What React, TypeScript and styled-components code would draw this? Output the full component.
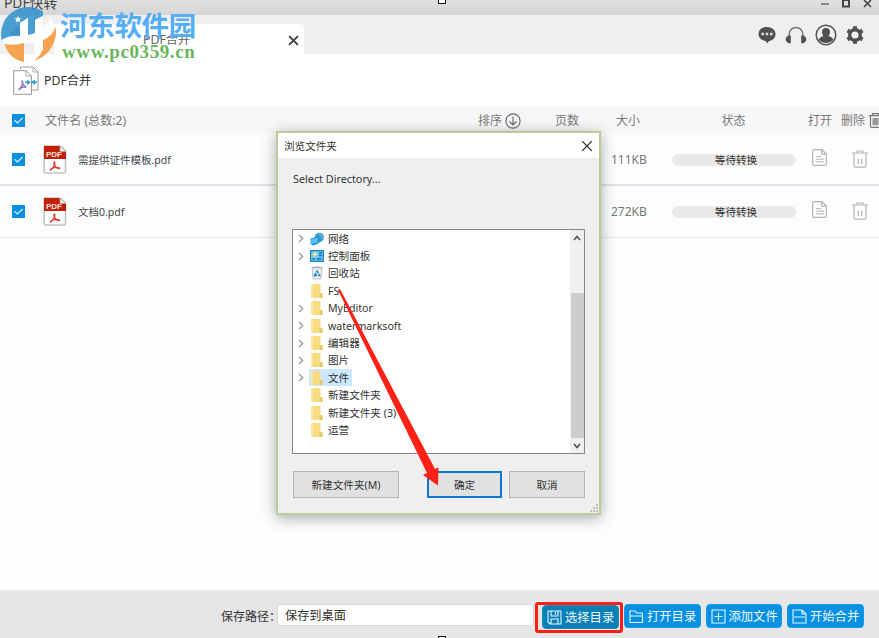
import React from 'react';
import styled, { createGlobalStyle } from 'styled-components';

const Global = createGlobalStyle`
  * { box-sizing: border-box; }
  body { margin: 0; overflow: hidden; font-family: "Noto Sans", "Noto Sans CJK SC", sans-serif; }
  svg { display: block; flex: none; }
`;

const Window = styled.div`
  position: relative;
  display: flex;
  flex-direction: column;
  width: 879px;
  height: 638px;
  overflow: hidden;
  background: #fcfdff;
  color: #333;
`;
const Text = styled.span<{ $size?: number; $color?: string; $track?: number; $weight?: number }>`
  font-size: ${p => p.$size ?? 12}px;
  line-height: 16px;
  color: ${p => p.$color ?? '#333'};
  letter-spacing: ${p => p.$track ?? 0}px;
  font-weight: ${p => p.$weight ?? 400};
  white-space: nowrap;
`;
const TitleBar = styled.header`
  display: flex;
  justify-content: space-between;
  align-items: flex-start;
  height: 15px;
  flex: none;
  padding: 0 6px 0 4px;
  background: linear-gradient(#e0e0e0, #d6d6d6);
`;
const AppName = styled.div`
  margin-top: -5px;
  display: flex;
`;
const TabStrip = styled.nav`
  display: flex;
  align-items: flex-end;
  height: 39px;
  flex: none;
  background: #efefef;
`;
const HomeTab = styled.div`
  width: 54px;
  padding: 0 0 11px 8px;
`;
const Tab = styled.div`
  display: flex;
  align-items: center;
  justify-content: space-between;
  width: 250px;
  height: 30px;
  padding: 2px 5px 0 89px;
  border-radius: 0 4px 0 0;
  background: #fff;
`;
const Tools = styled.div`
  display: flex;
  align-items: center;
  gap: 8px;
  height: 39px;
  margin-left: auto;
  padding-right: 14px;
`;
const PageHead = styled.div`
  display: flex;
  align-items: center;
  gap: 5px;
  height: 53px;
  flex: none;
  padding-left: 13px;
  background: #fff;
`;
const Grid = styled.div`
  display: grid;
  grid-template-columns: 43px 435px 77px 56px 60px 137px 33px 38px;
  align-items: center;
`;
const HeadRow = styled(Grid)`
  height: 26px;
  padding-top: 1px;
  background: #f7f7f7;
`;
const FileRow = styled(Grid)<{ $line: number }>`
  height: ${p => 51 + p.$line}px;
  padding-top: ${p => (p.$line > 1 ? 2 : 0)}px;
  border-bottom: ${p => p.$line}px solid ${p => (p.$line > 1 ? '#e0e1e4' : '#e8e9eb')};
`;
const Cell = styled.div<{ $pad?: number; $gap?: number; $lift?: number }>`
  display: flex;
  align-items: center;
  gap: ${p => p.$gap ?? 0}px;
  padding-left: ${p => p.$pad ?? 0}px;
  padding-bottom: ${p => p.$lift ?? 0}px;
`;
const StatusCell = styled.div`
  width: 125px;
  display: flex;
  justify-content: center;
`;
const StatusPill = styled.div`
  display: flex;
  align-items: center;
  justify-content: center;
  width: 124px;
  height: 12px;
  padding-left: 5px;
  border-radius: 6px;
  background: #ebe9e8;
`;
const Footer = styled.footer`
  display: flex;
  align-items: flex-start;
  height: 48px;
  margin-top: auto;
  padding: 13px 0 0 221px;
  background: #e6e6e6;
  border-top: 1px solid #ececec;
`;
const PathLabel = styled.div`
  display: flex;
  width: 56px;
  padding-top: 5px;
`;
const PathInput = styled.div`
  display: flex;
  align-items: center;
  width: 257px;
  height: 22px;
  padding: 1px 0 0 7px;
  border: 1px solid #dadada;
  border-radius: 3px;
  background: #fff;
`;
const FooterButtons = styled.div`
  display: flex;
  gap: 5px;
  margin-left: 1px;
`;
const HighlightFrame = styled.div`
  width: 88px;
  height: 31px;
  margin: -2px -4px 0 0;
  padding: 0 4px;
  border: 3px solid #ff1d12;
  border-radius: 3px;
`;
const ActionButton = styled.button<{ $active?: boolean }>`
  display: flex;
  align-items: center;
  gap: 3px;
  width: 76.5px;
  height: 24px;
  padding: 1px 0 0 4px;
  border: 1px solid ${p => (p.$active ? '#2389b5' : '#159ae8')};
  border-radius: 4px;
  background: ${p => (p.$active ? '#087fb5' : '#0590e2')};
  font-family: inherit;
`;
const Dialog = styled.section`
  position: absolute;
  left: 276px;
  top: 131px;
  display: flex;
  flex-direction: column;
  width: 325px;
  height: 384px;
  border: 2px solid #bccb9a;
  background: #efefef;
  box-shadow: 0 3px 14px rgba(0, 0, 0, 0.34);
`;
const DialogTitle = styled.div`
  display: flex;
  align-items: center;
  justify-content: space-between;
  height: 25px;
  flex: none;
  padding: 0 6px;
  background: #fff;
`;
const DialogBody = styled.div`
  display: flex;
  flex-direction: column;
  padding: 13px 14px 0;
`;
const Prompt = styled.div`
  display: flex;
  padding: 0 0 0 1px;
`;
const TreeBox = styled.div`
  display: flex;
  height: 225px;
  margin-top: 42px;
  border: 1px solid #828790;
  background: #fff;
`;
const TreeList = styled.ul`
  flex: 1;
  margin: 0;
  padding: 0;
  list-style: none;
`;
const TreeItem = styled.li`
  display: flex;
  align-items: center;
  height: 17.4px;
`;
const Expander = styled.span`
  display: flex;
  width: 16px;
  padding-left: 5px;
`;
const TreeLabel = styled.span<{ $selected?: boolean }>`
  display: flex;
  align-items: center;
  gap: 4px;
  height: 17px;
  padding: 0 3px 0 1px;
  background: ${p => (p.$selected ? '#cce8ff' : 'transparent')};
`;
const ScrollBar = styled.div`
  display: flex;
  flex-direction: column;
  align-items: center;
  width: 14px;
  background: #f0f0f0;
`;
const ScrollArrow = styled.div`
  display: flex;
  align-items: center;
  justify-content: center;
  height: 15px;
`;
const ScrollThumb = styled.div`
  width: 13px;
  height: 145px;
  margin-top: 48px;
  background: #cdcdcd;
`;
const DialogButtons = styled.div`
  display: flex;
  padding: 17px 0 0 1px;
`;
const DialogButton = styled.button<{ $w: number; $gap?: number; $primary?: boolean }>`
  display: flex;
  align-items: center;
  justify-content: center;
  width: ${p => p.$w}px;
  height: 27px;
  margin-left: ${p => p.$gap ?? 0}px;
  padding: 0;
  border: ${p => (p.$primary ? '2px solid #0878d4' : '1px solid #b5b5b5')};
  background: #e1e1e1;
  font-family: inherit;
`;
const Grip = styled.div`
  position: absolute;
  right: 1px;
  bottom: 1px;
`;
const Handle = styled.i<{ $top: number }>`
  position: absolute;
  left: 438px;
  top: ${p => p.$top}px;
  width: 8px;
  height: 8px;
  border: 1px solid #111;
  background: #fff;
`;
const ArrowLayer = styled.div`
  position: absolute;
  left: 330px;
  top: 280px;
`;
const Watermark = styled.div`
  position: absolute;
  left: 0;
  top: 5px;
  display: flex;
  gap: 3px;
`;
const WatermarkWords = styled.div`
  display: flex;
  flex-direction: column;
  padding-top: 3px;
`;
const SiteName = styled.div`
  font: 700 27.5px/33px "Noto Sans CJK SC", sans-serif;
  letter-spacing: -0.3px;
  color: #55adf3;
  white-space: nowrap;
`;
const SiteUrl = styled.div`
  padding-left: 2px;
  font: 700 19px/22px "Liberation Serif", serif;
  letter-spacing: 0.6px;
  color: #68b65a;
`;

const Check = () => (
  <svg width="13" height="13" viewBox="0 0 13 13">
    <rect width="13" height="13" rx=".5" fill="#0790e1" />
    <path d="M2.5 6.2 5.4 9 10.6 4" fill="none" stroke="#d9f1ff" strokeWidth="1.2" />
  </svg>
);
const PdfIcon = () => (
  <svg width="24" height="29" viewBox="0 0 24 29">
    <path d="M2 1H17L22.5 6V26.5Q22.5 28 21 28H3Q1.2 28 1.2 26.5V2Z" fill="#fff" stroke="#c3c3c3" strokeWidth="1.6" />
    <path d="M1 1H17L23 6.5V14H1Z" fill="#c32008" />
    <path d="M17 1V6.5H23Z" fill="#f2f2f2" stroke="#aaa" strokeWidth=".7" />
    <text x="3" y="12.3" fontFamily="Liberation Sans" fontWeight="700" fontSize="7" textLength="16" lengthAdjust="spacingAndGlyphs" fill="#fbe2df">PDF</text>
    <path d="M11 17Q12.5 17 11.5 20Q10.5 23 7.5 25.3M11 17Q10.2 19 12.3 21.5Q14 23.7 17 23.7M7.5 25.2Q6.7 24.5 10 23Q14 21.7 16.8 23" fill="none" stroke="#d83a32" strokeWidth="1.3" />
  </svg>
);
const MergeIcon = () => (
  <svg width="26" height="30" viewBox="0 0 26 30">
    <path d="M7.5 3V1H20L25 6V24H19" fill="#fff" stroke="#9a9a9a" />
    <path d="M20 1V6H25" fill="none" stroke="#aaa" />
    <path d="M.7 4.7H13L18.5 10V28.3H.7Z" fill="#fff" stroke="#999" />
    <path d="M13 4.7V10H18.5" fill="none" stroke="#aaa" />
    <path d="M9 14.5Q10.5 17.5 8.8 20Q7.5 22 5.5 23.8M9 15Q9.5 19 13.5 21.5M6 23.3Q9 20.5 13.5 21.2" fill="none" stroke="#9479c6" strokeWidth="1.6" />
    <path d="M12 16.2H16M19 16.2H24" stroke="#229edb" strokeWidth="1.4" />
    <path d="M14.3 13.5 17.8 16.2 14.3 19ZM22 13.5 18.5 16.2 22 19Z" fill="#229edb" />
  </svg>
);
const OpenIcon = () => (
  <svg width="15" height="17" viewBox="0 0 15 17">
    <path d="M2 .7H10L14.3 5V15.2Q14.3 16.3 13 16.3H2Q.7 16.3.7 15V2Q.7.7 2 .7ZM9.7.7V5.2H14.3" fill="none" stroke="#b3b3b3" strokeWidth="1.2" />
    <path d="M4 7.6H9M4 10.2H12M4 12.8H12" stroke="#b3b3b3" />
  </svg>
);
const TrashIcon = () => (
  <svg width="16" height="18" viewBox="0 0 16 18">
    <path d="M0 3H16M5 2.5V1H11V2.5M2 3.5V15.5Q2 17.2 3.5 17.2H12.5Q14 17.2 14 15.5V3.5M6.3 8.5V14M9.7 8.5V14" fill="none" stroke="#b5b5b5" strokeWidth="1.2" />
  </svg>
);
const DeleteAllIcon = () => (
  <svg width="13" height="15" viewBox="0 0 13 15">
    <path d="M0 2.6H13M3.5 2.5V.7H9.5V2.5M1.5 3V13Q1.5 14.3 3 14.3H10Q11.5 14.3 11.5 13V3" fill="none" stroke="#777" strokeWidth="1.2" />
    <path d="M3.5 5H9.5V12.3H3.5Z" fill="#999" />
  </svg>
);
const Folder = () => (
  <svg width="14" height="16" viewBox="0 0 14 16">
    <path d="M1 1H10.5V10L12.5 11V15H1Z" fill="#f9dc82" />
    <path d="M1 1H3V15H1Z" fill="#fae7a7" />
    <path d="M10.5 10.2H12.5V15H9.7V12Z" fill="#eac75d" />
  </svg>
);
const NetworkIcon = () => (
  <svg width="14" height="14" viewBox="0 0 14 14">
    <circle cx="9.3" cy="5.5" r="4.7" fill="#3d9bd3" />
    <path d="M9 1.2Q12 3 13 7" stroke="#8fd0ee" fill="none" strokeWidth=".8" />
    <path d="M.5 6.5 8 4.5 9.3 5.5V11L3.5 13.5.5 12Z" fill="#208bcf" />
    <path d="M1 7.3 7.8 5.5V10.5L1 12Z" fill="#56c4f4" />
  </svg>
);
const PanelIcon = () => (
  <svg width="14" height="12" viewBox="0 0 14 12">
    <rect x=".6" y=".6" width="12.8" height="10.8" fill="#70c7ef" stroke="#1684cb" strokeWidth="1.2" />
    <circle cx="4.5" cy="4.7" r="2" fill="#f6d460" />
    <path d="M9 3H12M9 5.5H12M2.5 9H5M7 9H11.5" stroke="#116fae" strokeWidth="1.3" />
    <path d="M4.5 4.7V2.4A2.2 2.2 0 0 1 6.7 4.7Z" fill="#fff" />
  </svg>
);
const RecycleIcon = () => (
  <svg width="14" height="14" viewBox="0 0 14 14">
    <path d="M2 1.5 7 .7 12 1.5 10.8 13H3.2Z" fill="#e8edf0" stroke="#acb6bc" strokeWidth=".8" />
    <path d="M2 1.7H12" stroke="#9ba7ae" />
    <path d="M4.5 9.5 7 5.3 9.5 9.5Z" fill="none" stroke="#267cc1" strokeWidth="1.6" strokeDasharray="3 1" />
  </svg>
);
const Cross = ({ size, width, color }: { size: number; width: number; color: string }) => (
  <svg width={size} height={size} viewBox="0 0 10 10">
    <path d="M1 1 9 9M9 1 1 9" stroke={color} strokeWidth={width} />
  </svg>
);
const Chevron = () => (
  <svg width="6" height="9" viewBox="0 0 6 9">
    <path d="M1 1 4.7 4.5 1 8" fill="none" stroke="#999" strokeWidth="1.3" />
  </svg>
);
const ScrollChevron = ({ down = false }: { down?: boolean }) => (
  <svg width="8" height="6" viewBox="0 0 8 6">
    <path d={down ? 'M1 1 4 4.5 7 1' : 'M1 5 4 1.5 7 5'} fill="none" stroke="#505050" strokeWidth="1.6" />
  </svg>
);

const actionPaths: Record<string, string> = {
  save: 'M1 1H14V14H3L1 12ZM4 1V6H11V1M4 14V9H11V14M8.5 2V4.5',
  open: 'M1 13.5V2H6L7.5 4H13.5V13.5ZM1 7H13.5',
  add: 'M1 1H14V14H1ZM3.5 7.5H11.5M7.5 3.5V11.5',
  merge: 'M1 7V1H10L14 5V7M10 1V5H14M1 9V14H14V9M0 8H15',
};
const ActionIcon = ({ kind }: { kind: string }) => (
  <svg width="15" height="15" viewBox="0 0 15 15">
    <path d={actionPaths[kind]} fill="none" stroke="#e5f5ff" strokeWidth="1.1" />
  </svg>
);
const Action = ({ kind, label, active }: { kind: string; label: string; active?: boolean }) => (
  <ActionButton $active={active}>
    <ActionIcon kind={kind} />
    <Text $size={12.3} $color="#f1faff">{label}</Text>
  </ActionButton>
);

const files = [
  { name: '需提供证件模板.pdf', size: '111KB', line: 2 },
  { name: '文档0.pdf', size: '272KB', line: 1 },
];
const folders = [
  { label: '网络', icon: <NetworkIcon />, expand: true },
  { label: '控制面板', icon: <PanelIcon />, expand: true },
  { label: '回收站', icon: <RecycleIcon /> },
  { label: 'FS' },
  { label: 'MyEditor', expand: true },
  { label: 'watermarksoft', expand: true },
  { label: '编辑器', expand: true },
  { label: '图片', expand: true },
  { label: '文件', expand: true, selected: true },
  { label: '新建文件夹' },
  { label: '新建文件夹 (3)' },
  { label: '运营' },
];

const BrowseDialog = () => (
  <Dialog>
    <DialogTitle>
      <Text $size={10.6}>浏览文件夹</Text>
      <Cross size={12} width={1} color="#222" />
    </DialogTitle>
    <DialogBody>
      <Prompt><Text $size={10.8}>Select Directory...</Text></Prompt>
      <TreeBox>
        <TreeList>
          {folders.map(f => (
            <TreeItem key={f.label}>
              <Expander>{f.expand && <Chevron />}</Expander>
              <TreeLabel $selected={f.selected}>
                {f.icon ?? <Folder />}
                <Text $size={10.6}>{f.label}</Text>
              </TreeLabel>
            </TreeItem>
          ))}
        </TreeList>
        <ScrollBar>
          <ScrollArrow><ScrollChevron /></ScrollArrow>
          <ScrollThumb />
          <ScrollArrow><ScrollChevron down /></ScrollArrow>
        </ScrollBar>
      </TreeBox>
      <DialogButtons>
        <DialogButton $w={106}><Text $size={10.6}>新建文件夹(M)</Text></DialogButton>
        <DialogButton $w={75} $gap={28} $primary><Text $size={10.6}>确定</Text></DialogButton>
        <DialogButton $w={76} $gap={7}><Text $size={10.6}>取消</Text></DialogButton>
      </DialogButtons>
    </DialogBody>
    <Grip>
      <svg width="8" height="8" viewBox="0 0 8 8">
        <path d="M6 0H8V2H6ZM3 3H5V5H3ZM6 3H8V5H6ZM0 6H2V8H0ZM3 6H5V8H3ZM6 6H8V8H6Z" fill="#bdbdbd" />
      </svg>
    </Grip>
  </Dialog>
);

const SiteLogo = () => (
  <svg width="57" height="58" viewBox="0 0 57 58">
    <path d="M2 36A27 27 0 0 1 43 6.5L43 11 35 15V28Q31 30 28 30V13L20 18V32Q10 33 2 36Z" fill="#2d8fcc" fillOpacity=".85" />
    <path d="M1.5 35Q10 30 20 31V18L28 13V30Q44 28 50 12Q55 20 55.5 23Q50 33 43 35V48Q40 54 34 56V37Q29 38.5 24 38.5V57Q17 56 12 52 6 46 4.500 39Z" fill="#fff" fillOpacity=".94" />
    <path d="M35 15 43 11V48Q40 53 35 56Z" fill="#fff" />
    <path d="M55.5 22Q58 34 49 46 43 53 34 56 41 50 43 44V35Q52 32 55.500 22Z" fill="#f5a350" />
    <path d="M4.500 39Q14 41 24 38V57Q9 54 4.500 39Z" fill="#f5a350" />
    <path d="M18 11 19 13.300 21.500 13.300 19.500 15 20.300 17.500 18 16 15.700 17.500 16.500 15 14.500 13.300 17 13.300Z" fill="#fff" />
  </svg>
);

export default function App() {
  return (
    <Window>
      <Global />
      <TitleBar>
        <AppName><Text $size={13.8} $color="#444">PDF快转</Text></AppName>
        <svg width="54" height="10" viewBox="0 0 54 10">
          <path d="M2 4H10" stroke="#555" strokeWidth="1.3" />
          <path d="M24 0H30V6.500H24Z" fill="none" stroke="#444" strokeWidth="2" />
          <path d="M45 0 52 7M52 0 45 7" stroke="#444" strokeWidth="1.6" />
        </svg>
      </TitleBar>
      <TabStrip>
        <HomeTab>
          <svg width="20" height="18" viewBox="0 0 20 18">
            <path d="M10 1 1 9H4V17H8V11H12V17H16V9H19Z" fill="#999" />
          </svg>
        </HomeTab>
        <Tab>
          <Text $size={12.3} $color="#666">PDF合并</Text>
          <Cross size={11} width={1.8} color="#444" />
        </Tab>
        <Tools>
          <svg width="20" height="20" viewBox="0 0 20 20">
            <path d="M10 2C4.500 2 1.500 5 1.500 9S5 15.500 8.500 16L10.500 18.500 12 16C16 15.500 18.500 13 18.500 9S15 2 10 2Z" fill="#505050" />
            <path d="M4.500 7.700H7V10.200H4.500ZM8.700 7.700H11.200V10.200H8.700ZM13 7.700H15.500V10.200H13Z" fill="#ddd" />
          </svg>
          <svg width="22" height="20" viewBox="0 0 22 20">
            <path d="M4 15V10C4 0 18 0 18 10V15" fill="none" stroke="#777" strokeWidth="1.4" />
            <path d="M5.800 10.500V18.300H4Q.7 17 .7 14.300T4 10.500ZM16.200 10.500V18.300H18Q21.300 17 21.300 14.300T18 10.500Z" fill="#4e4e4e" />
          </svg>
          <svg width="22" height="22" viewBox="0 0 22 22">
            <circle cx="11" cy="11" r="9.800" fill="none" stroke="#555" strokeWidth="1.500" />
            <path d="M7 8A4 4 0 0 1 15 8Q15 10.500 13.500 12 18 13.500 18.200 16Q15.500 19 11 19T3.800 16Q4 13.500 8.500 12 7 10.500 7 8Z" fill="#4f4f4f" />
          </svg>
          <svg width="20" height="20" viewBox="0 0 20 20">
            <circle cx="10" cy="10" r="5.300" fill="none" stroke="#505050" strokeWidth="3.400" />
            <path d="M8 1.300H12V4H8ZM8 16H12V18.700H8ZM1.500 7.200 3.500 3.700 6 5.200 4 8.700ZM14 5.200 16.500 3.700 18.500 7.200 16 8.700ZM1.500 12.800 4 11.300 6 14.800 3.500 16.300ZM16 11.300 18.500 12.800 16.500 16.300 14 14.800Z" fill="#505050" />
          </svg>
        </Tools>
      </TabStrip>
      <PageHead><MergeIcon /><Text $size={12.3}>PDF合并</Text></PageHead>
      <HeadRow>
        <Cell $pad={12}><Check /></Cell>
        <Cell $pad={2}><Text $size={12.1} $color="#777">文件名 (总数:2)</Text></Cell>
        <Cell $gap={3}>
          <Text $color="#777">排序</Text>
          <svg width="16" height="16" viewBox="0 0 16 16">
            <circle cx="8" cy="8" r="7.100" fill="none" stroke="#666" strokeWidth="1.100" />
            <path d="M8 3.500V12M4.500 8.500 8 12 11.500 8.500" fill="none" stroke="#666" strokeWidth="1.100" />
          </svg>
        </Cell>
        <Cell><Text $color="#777">页数</Text></Cell>
        <Cell $pad={5}><Text $color="#777">大小</Text></Cell>
        <StatusCell><Text $color="#777">状态</Text></StatusCell>
        <Cell><Text $color="#777">打开</Text></Cell>
        <Cell $gap={4}><Text $color="#777">删除</Text><DeleteAllIcon /></Cell>
      </HeadRow>
      {files.map(f => (
        <FileRow key={f.name} $line={f.line}>
          <Cell $pad={12}><Check /></Cell>
          <Cell $gap={11}><PdfIcon /><Text $size={10.5} $color="#444">{f.name}</Text></Cell>
          <Cell />
          <Cell />
          <Cell><Text $size={12} $color="#777">{f.size}</Text></Cell>
          <StatusCell><StatusPill><Text $size={10.6}>等待转换</Text></StatusPill></StatusCell>
          <Cell $pad={4} $lift={4}><OpenIcon /></Cell>
          <Cell $pad={11} $lift={1}><TrashIcon /></Cell>
        </FileRow>
      ))}
      <Footer>
        <PathLabel><Text>保存路径：</Text></PathLabel>
        <PathInput><Text $size={12.2}>保存到桌面</Text></PathInput>
        <FooterButtons>
          <HighlightFrame><Action kind="save" label="选择目录" active /></HighlightFrame>
          <Action kind="open" label="打开目录" />
          <Action kind="add" label="添加文件" />
          <Action kind="merge" label="开始合并" />
        </FooterButtons>
      </Footer>
      <BrowseDialog />
      <ArrowLayer>
        <svg width="116" height="210" viewBox="330 280 116 210">
          <path d="M338 290 340 289 435 469 438.500 467.300 438 485.500 423 475 427 473Z" fill="#ff2115" />
        </svg>
      </ArrowLayer>
      <Watermark>
        <SiteLogo />
        <WatermarkWords>
          <SiteName>河东软件园</SiteName>
          <SiteUrl>www.pc0359.cn</SiteUrl>
        </WatermarkWords>
      </Watermark>
      <Handle $top={-4} />
      <Handle $top={636} />
    </Window>
  );
}
